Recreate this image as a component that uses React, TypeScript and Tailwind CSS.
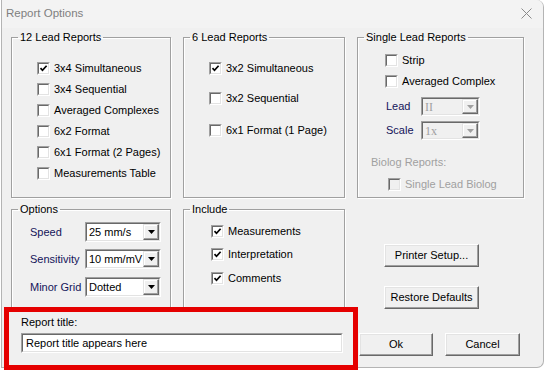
import React from "react"

const font = { fontFamily: '"Liberation Sans", Arial, sans-serif' }

function Check({ checked = false, disabled = false }: { checked?: boolean; disabled?: boolean }) {
  return (
    <span className="inline-block w-[13px] h-[13px] shrink-0 border border-t-[#a0a0a0] border-l-[#a0a0a0] border-b-white border-r-white">
      <span
        className={`flex items-center justify-center w-full h-full border border-t-[#696969] border-l-[#696969] border-b-[#e3e3e3] border-r-[#e3e3e3] ${
          disabled ? "bg-[#f0f0f0]" : "bg-white"
        }`}
      >
        {checked && (
          <svg width="9" height="9" viewBox="0 0 9 9">
            <path d="M1.5 4.2 L3.5 6.3 L7.6 1.8" fill="none" stroke="#000" strokeWidth="1.7" />
          </svg>
        )}
      </span>
    </span>
  )
}

function CheckRow({ label, checked, disabled, className = "" }: { label: string; checked?: boolean; disabled?: boolean; className?: string }) {
  return (
    <div className={`flex items-center h-[14px] gap-[4px] ${className}`}>
      <Check checked={checked} disabled={disabled} />
      <span className={`whitespace-nowrap ${disabled ? "text-[#a0a0a0]" : "text-black"}`}>{label}</span>
    </div>
  )
}

function Combo({ value, width, disabled = false, height = "h-[20px]" }: { value: string; width: string; disabled?: boolean; height?: string }) {
  return (
    <div className={`${width} ${height} border border-t-[#a0a0a0] border-l-[#a0a0a0] border-b-white border-r-white`}>
      <div
        className={`flex h-full border border-t-[#696969] border-l-[#696969] border-b-[#e3e3e3] border-r-[#e3e3e3] ${
          disabled ? "bg-[#f0f0f0]" : "bg-white"
        }`}
      >
        <span
          className={`flex-1 pl-[2px] leading-[16px] whitespace-nowrap overflow-hidden ${
            disabled ? "text-[#a0a0a0] font-['Liberation_Serif'] text-[12px]" : "text-black"
          }`}
        >
          {value}
        </span>
        <span className="w-[16px] h-full flex items-center justify-center bg-[#f0f0f0] border border-t-[#e3e3e3] border-l-[#e3e3e3] border-b-[#696969] border-r-[#696969] shadow-[inset_-1px_-1px_0_#a0a0a0,inset_1px_1px_0_#fff]">
          <svg width="7" height="4" viewBox="0 0 7 4">
            <path d="M0 0 H7 L3.5 4 Z" fill={disabled ? "#a0a0a0" : "#000"} />
          </svg>
        </span>
      </div>
    </div>
  )
}

function Button({ label, width }: { label: string; width: string }) {
  return (
    <button
      type="button"
      className={`${width} h-[23px] bg-[#f0f0f0] text-black border border-t-white border-l-white border-b-[#696969] border-r-[#696969] shadow-[inset_-1px_-1px_0_#a0a0a0,inset_1px_1px_0_#e3e3e3] leading-[13px]`}
    >
      {label}
    </button>
  )
}

function Group({ title, className, children }: { title: string; className: string; children: React.ReactNode }) {
  return (
    <fieldset className={`border border-[#a0a0a0] shadow-[1px_1px_0_#fff,inset_1px_1px_0_#fff] ${className}`}>
      <legend className="ml-[6px] px-[2px] leading-[13px] text-black">{title}</legend>
      {children}
    </fieldset>
  )
}

export default function App() {
  return (
    <div className="w-[544px] h-[370px] bg-white overflow-hidden text-[11px]" style={font}>
      <div className="ml-[1px] w-[543px] h-[368px] bg-[#f0f0f0] border border-t-0 border-[#b4b4b4] rounded-r-[7px]">
        {/* title bar */}
        <div className="h-[28px] flex items-center justify-between pl-[4px] pr-[9px] bg-[#f3f3f3] rounded-tr-[7px]">
          <span className="text-[11.5px] text-[#808080] -mt-[1px]">Report Options</span>
          <svg width="11" height="11" viewBox="0 0 11 11" className="mr-[2px] -mt-[2px]">
            <path d="M0.5 0.5 L10.5 10.5 M10.5 0.5 L0.5 10.5" stroke="#8a8a8a" strokeWidth="1" />
          </svg>
        </div>

        {/* top groups */}
        <div className="flex pl-[9px] gap-[12px] mt-[3px]">
          <Group title="12 Lead Reports" className="w-[160px] h-[167px]">
            <div className="flex flex-col gap-[7px] pl-[25px] pt-[17px]">
              <CheckRow label="3x4 Simultaneous" checked />
              <CheckRow label="3x4 Sequential" />
              <CheckRow label="Averaged Complexes" />
              <CheckRow label="6x2 Format" />
              <CheckRow label="6x1 Format (2 Pages)" />
              <CheckRow label="Measurements Table" />
            </div>
          </Group>
          <Group title="6 Lead Reports" className="w-[162px] h-[167px]">
            <div className="flex flex-col pl-[25px] pt-[17px]">
              <CheckRow label="3x2 Simultaneous" checked />
              <CheckRow label="3x2 Sequential" className="mt-[16px]" />
              <CheckRow label="6x1 Format (1 Page)" className="mt-[18px]" />
            </div>
          </Group>
          <Group title="Single Lead Reports" className="w-[167px] h-[167px]">
            <div className="flex flex-col pl-[27px] pt-[9px]">
              <CheckRow label="Strip" />
              <CheckRow label="Averaged Complex" className="mt-[7px]" />
              <div className="flex items-center mt-[9px] ml-[1px]">
                <span className="w-[35px] text-[#14145a]">Lead</span>
                <Combo value="II" width="w-[59px]" height="h-[19px]" disabled />
              </div>
              <div className="flex items-center mt-[5px] ml-[1px]">
                <span className="w-[35px] text-[#14145a]">Scale</span>
                <Combo value="1x" width="w-[59px]" height="h-[19px]" disabled />
              </div>
              <div className="-ml-[14px] mt-[16px] text-[#a0a0a0] leading-[13px]">Biolog Reports:</div>
              <CheckRow label="Single Lead Biolog" disabled className="mt-[8px] ml-[3px]" />
            </div>
          </Group>
        </div>

        {/* middle groups */}
        <div className="flex pl-[9px] gap-[12px] mt-[5px]">
          <Group title="Options" className="w-[160px] h-[107px]">
            <div className="flex flex-col pl-[18px] pt-[6px]">
              <div className="flex items-center">
                <span className="w-[55px] text-[#14145a]">Speed</span>
                <Combo value="25 mm/s" width="w-[76px]" />
              </div>
              <div className="flex items-center mt-[7px]">
                <span className="w-[55px] text-[#14145a]">Sensitivity</span>
                <Combo value="10 mm/mV" width="w-[76px]" />
              </div>
              <div className="flex items-center mt-[8px]">
                <span className="w-[55px] text-[#14145a]">Minor Grid</span>
                <Combo value="Dotted" width="w-[76px]" />
              </div>
            </div>
          </Group>
          <Group title="Include" className="w-[162px] h-[107px]">
            <div className="flex flex-col pl-[27px] pt-[8px]">
              <CheckRow label="Measurements" checked />
              <CheckRow label="Interpretation" checked className="mt-[9px]" />
              <CheckRow label="Comments" checked className="mt-[10px]" />
            </div>
          </Group>
          <div className="flex flex-col gap-[19px] ml-[27px] mt-[41px]">
            <Button label="Printer Setup..." width="w-[95px]" />
            <Button label="Restore Defaults" width="w-[95px]" />
          </div>
        </div>

        {/* bottom row */}
        <div className="flex">
          <div className="relative ml-[2px] -mt-[3px] w-[354px] h-[63px] border-[5px] border-[#e50000] bg-[#f0f0f0] pl-[12px] pt-[4px]">
            <div className="text-black leading-[13px]">Report title:</div>
            <div className="mt-[4px] w-[322px] h-[20px] border border-t-[#a0a0a0] border-l-[#a0a0a0] border-b-white border-r-white">
              <div className="h-full bg-white border border-t-[#696969] border-l-[#696969] border-b-[#e3e3e3] border-r-[#e3e3e3] pl-[3px] leading-[16px] text-black">
                Report title appears here
              </div>
            </div>
          </div>
          <div className="flex gap-[12px] ml-[1px] mt-[23px]">
            <Button label="Ok" width="w-[74px]" />
            <Button label="Cancel" width="w-[75px]" />
          </div>
        </div>
      </div>
    </div>
  )
}
